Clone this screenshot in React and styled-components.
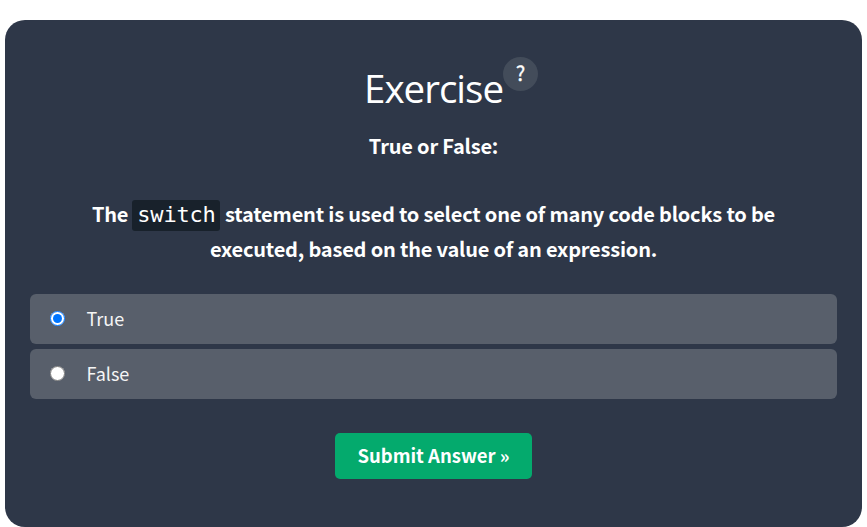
import React, { useState } from "react";
import styled, { createGlobalStyle } from "styled-components";

const sans = `"Noto Sans CJK SC", "Source Sans Pro", sans-serif`;

const GlobalStyle = createGlobalStyle`
  * { box-sizing: border-box; }
  body { margin: 0; background: #fff; overflow: hidden; }
`;

const Card = styled.main`
  display: flex;
  flex-direction: column;
  align-items: center;
  width: 857px;
  height: 507px;
  margin: 20px 0 0 5px;
  padding: 37px 25px 0;
  border-radius: 20px;
  background: #2e3748;
  color: #fff;
  font-family: ${sans};
`;

const Header = styled.header`
  display: flex;
  align-items: flex-start;
  height: 71px;
  padding-left: 35px;
`;

const Title = styled.h1`
  width: 139px;
  margin: 3px 0 0;
  font: 400 38.5px/56px "Open Sans", sans-serif;
  letter-spacing: -1px;
  white-space: nowrap;
`;

const Help = styled.button`
  width: 35px;
  height: 34px;
  padding: 0 0 2px;
  border: 0;
  border-radius: 50%;
  background: #434c5a;
  color: #fff;
  font: 400 20px/32px ${sans};
  -webkit-text-stroke: 0.3px #fff;
`;

const Prompt = styled.p`
  margin: 0;
  font-size: 20px;
  font-weight: 700;
  line-height: 35px;
  height: ${(p) => p.$height}px;
  text-align: center;
  white-space: nowrap;
  letter-spacing: -0.19px;
`;

const Code = styled.code`
  display: inline-block;
  width: 88px;
  height: 31px;
  margin: 0 0.7px 0 -0.7px;
  padding-left: 1px;
  border-radius: 3px;
  background: #18212b;
  font: 400 22px/29px "DejaVu Sans Mono", monospace;
  letter-spacing: -0.2px;
  vertical-align: baseline;
`;

const Options = styled.div`
  display: grid;
  gap: 5px;
  width: 100%;
  margin-top: 28px;
`;

const Option = styled.label`
  display: flex;
  align-items: center;
  height: 50px;
  padding: 0 0 2px 20px;
  border-radius: 6px;
  background: #585f6b;
  color: #f5f5f5;
  font-size: 18px;
  line-height: 48px;
`;

const Radio = styled.input`
  width: 15px;
  height: 15px;
  margin: 1px 21.4px 0 0;
`;

const Submit = styled.button`
  width: 197px;
  height: 46px;
  margin-top: 34px;
  padding: 0 0 2px;
  border: 0;
  border-radius: 5px;
  background: #04aa6d;
  color: #fff;
  font: 700 18.5px/44px ${sans};
  white-space: nowrap;
`;

export default function App() {
  const [answer, setAnswer] = useState("True");
  return (
    <>
      <GlobalStyle />
      <Card>
        <Header>
          <Title>Exercise</Title>
          <Help type="button">?</Help>
        </Header>
        <Prompt $height={68}>True or False:</Prompt>
        <Prompt $height={35}>
          The <Code>switch</Code> statement is used to select one of many code blocks to be
        </Prompt>
        <Prompt $height={35}>executed, based on the value of an expression.</Prompt>
        <Options>
          {["True", "False"].map((value) => (
            <Option key={value}>
              <Radio
                type="radio"
                name="answer"
                checked={answer === value}
                onChange={() => setAnswer(value)}
              />
              {value}
            </Option>
          ))}
        </Options>
        <Submit type="button">Submit Answer »</Submit>
      </Card>
    </>
  );
}
